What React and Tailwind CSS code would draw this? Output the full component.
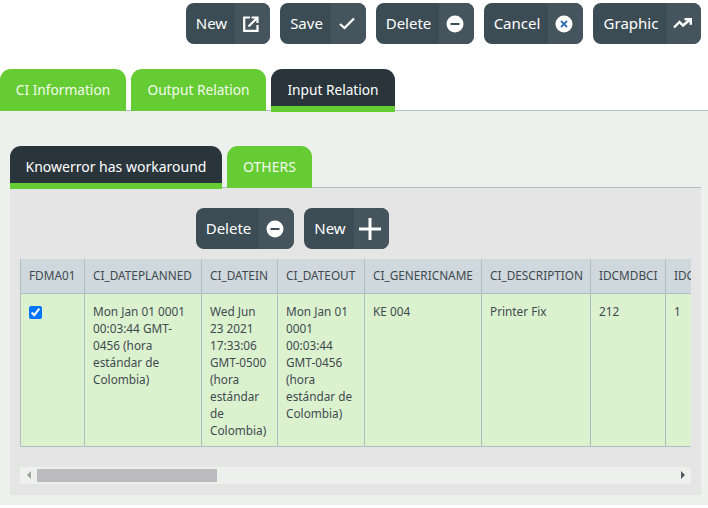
import React from "react";

const font = { fontFamily: '"Noto Sans", sans-serif' };

function OpenIcon() {
  return (
    <svg width="16" height="16" viewBox="0 0 16 16" fill="none" stroke="white" strokeWidth="2.2">
      <path d="M7 1.5H1.2v13.3H14.5V9" />
      <path d="M5.5 10.5 14 2M8.5 1.5h6V7" />
    </svg>
  );
}
function CheckIcon() {
  return (
    <svg width="16" height="13" viewBox="0 0 16 13" fill="none" stroke="white" strokeWidth="2.2">
      <path d="M1 7 5.5 11 15 1.5" />
    </svg>
  );
}
function MinusIcon() {
  return (
    <svg width="18" height="18" viewBox="0 0 18 18">
      <circle cx="9" cy="9" r="8.5" fill="white" />
      <rect x="4.5" y="8" width="9" height="2" fill="#3f4f58" />
    </svg>
  );
}
function XIcon() {
  return (
    <svg width="18" height="18" viewBox="0 0 18 18">
      <circle cx="9" cy="9" r="8.5" fill="white" />
      <path d="M6 6l6 6M12 6l-6 6" stroke="#2f6fb0" strokeWidth="1.8" />
    </svg>
  );
}
function TrendIcon() {
  return (
    <svg width="19" height="11" viewBox="0 0 19 11" fill="none" stroke="white" strokeWidth="2.4">
      <path d="M1 9.5 6.5 4 10 7.5 16.5 2" />
      <path d="M11.5 1.2h6.3v5.6" />
    </svg>
  );
}
function PlusIcon() {
  return (
    <svg width="22" height="22" viewBox="0 0 22 22" fill="none" stroke="white" strokeWidth="3">
      <path d="M11 0v22M0 11h22" />
    </svg>
  );
}

function Btn({ label, w, iw, icon }) {
  return (
    <button className="flex h-[41px] shrink-0 overflow-hidden rounded-lg bg-[#3c4c54] text-[15px] text-white" style={{ width: w }}>
      <span className="flex flex-1 items-center justify-center pl-[2px]">{label}</span>
      <span className="flex h-full items-center justify-center bg-[#46545d] pr-[4px]" style={{ width: iw }}>{icon}</span>
    </button>
  );
}

function Tab({ label, active, w, small }) {
  return (
    <div
      className={
        (small ? "text-[13.7px] " : "text-sm ") +
        (active
          ? "flex h-[43px] items-center justify-center rounded-t-[11px] border-b-[6px] border-[#66cc33] bg-[#2a343b] pt-[5px] text-white"
          : "flex h-[42px] items-center justify-center rounded-t-[11px] bg-[#66cc33] text-[#f3faee]")
      }
      style={{ width: w }}
    >
      {label}
    </div>
  );
}

const cols = [
  ["FDMA01", 64],
  ["CI_DATEPLANNED", 117],
  ["CI_DATEIN", 76],
  ["CI_DATEOUT", 87],
  ["CI_GENERICNAME", 117],
  ["CI_DESCRIPTION", 109],
  ["IDCMDBCI", 75],
  ["IDCMDBCITYPE", 100],
];

const cells = [
  null,
  "Mon Jan 01 0001 00:03:44 GMT-0456 (hora estándar de Colombia)",
  "Wed Jun 23 2021 17:33:06 GMT-0500 (hora estándar de Colombia)",
  "Mon Jan 01 0001 00:03:44 GMT-0456 (hora estándar de Colombia)",
  "KE 004",
  "Printer Fix",
  "212",
  "1",
];

export default function App() {
  return (
    <div className="h-[508px] w-[708px] overflow-hidden bg-white" style={font}>
      <div className="flex h-[69px] items-start justify-end gap-[10px] pt-[3px] pr-[7px]">
        <Btn label="New" w={84} iw={35} icon={<OpenIcon />} />
        <Btn label="Save" w={86} iw={35} icon={<CheckIcon />} />
        <Btn label="Delete" w={98} iw={35} icon={<MinusIcon />} />
        <Btn label="Cancel" w={99} iw={35} icon={<XIcon />} />
        <Btn label="Graphic" w={108} iw={34} icon={<TrendIcon />} />
      </div>

      <div className="flex h-[42px] items-start gap-[5px] border-b border-[#b0bec5]">
        <Tab label="CI Information" w={126} small />
        <Tab label="Output Relation" w={135} small />
        <Tab label="Input Relation" w={124} active small />
      </div>

      <div className="h-[394px] bg-[#eef0ed] pt-[35px] pl-[10px] pr-[7px]">
        <div className="flex h-[42px] items-start gap-[5px] border-b border-[#b0bec5]">
          <Tab label="Knowerror has workaround" w={212} active />
          <Tab label="OTHERS" w={85} />
        </div>
        <div className="h-[307px] bg-[#e5e5e5] pt-[20px] pl-[10px] pr-[10px]">
          <div className="flex gap-[10px] pl-[176px]">
            <Btn label="Delete" w={98} iw={35} icon={<MinusIcon />} />
            <Btn label="New" w={85} iw={35} icon={<PlusIcon />} />
          </div>

          <div className="mt-[10px] overflow-hidden">
            <table className="table-fixed border-collapse text-[11.8px] text-[#3f4a50]" style={{ width: 745 }}>
              <colgroup>
                {cols.map(([n, w]) => (
                  <col key={n} style={{ width: w }} />
                ))}
              </colgroup>
              <thead>
                <tr className="h-[34px] bg-[#cfd8dc]">
                  {cols.map(([n]) => (
                    <th key={n} className="border-x border-b border-[#b0bec5] px-2 text-left font-normal whitespace-nowrap">
                      {n}
                    </th>
                  ))}
                </tr>
              </thead>
              <tbody>
                <tr className="h-[153px] bg-[#dcf2cf]">
                  {cells.map((c, i) => (
                    <td key={i} className="border border-[#b0bec5] px-2 pt-[9px] align-top leading-[17px]">
                      {c === null ? (
                        <input type="checkbox" defaultChecked className="mt-[3px] block h-[13px] w-[13px]" />
                      ) : (
                        c
                      )}
                    </td>
                  ))}
                </tr>
              </tbody>
            </table>
          </div>

          <div className="mt-[20px] flex h-[17px] items-center bg-[#eef0ed]">
            <div className="flex w-[17px] justify-center">
              <div className="h-0 w-0 border-y-[4px] border-r-[4px] border-y-transparent border-r-[#a0a0a0]" />
            </div>
            <div className="h-[13px] w-[180px] bg-[#bcbbbf]" />
            <div className="flex-1" />
            <div className="flex w-[17px] justify-center">
              <div className="h-0 w-0 border-y-[4px] border-l-[4px] border-y-transparent border-l-[#505a60]" />
            </div>
          </div>
        </div>
      </div>
    </div>
  );
}
